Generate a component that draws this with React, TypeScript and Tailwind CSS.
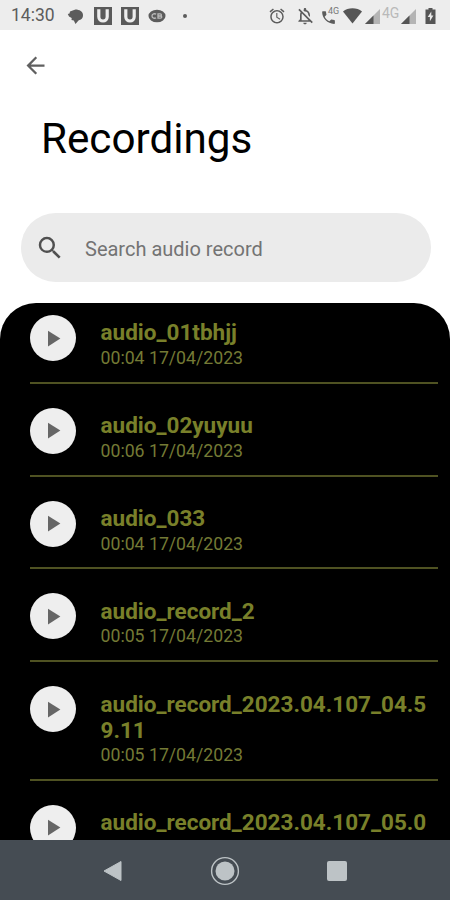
import React from 'react';
import { MdArrowBack, MdSearch, MdPlayArrow, MdAlarm, MdOutlineNotificationsOff, MdPhone } from 'react-icons/md';

interface Recording {
  name: string;
  duration: string;
  date: string;
}

const recordings: Recording[] = [
  { name: 'audio_01tbhjj', duration: '00:04', date: '17/04/2023' },
  { name: 'audio_02yuyuu', duration: '00:06', date: '17/04/2023' },
  { name: 'audio_033', duration: '00:04', date: '17/04/2023' },
  { name: 'audio_record_2', duration: '00:05', date: '17/04/2023' },
  { name: 'audio_record_2023.04.107_04.59.11', duration: '00:05', date: '17/04/2023' },
  { name: 'audio_record_2023.04.107_05.0', duration: '', date: '' },
];

const AppBadge: React.FC = () => (
  <svg width="18" height="18" viewBox="0 0 18 18">
    <path d="M0 0h18v18H0z" fill="#5a5a5a" />
    <path d="M4.800 2.200v7.600a4.200 4.200 0 0 0 8.400 0V2.200" fill="none" stroke="#ededed" strokeWidth="3.200" />
  </svg>
);

const Signal: React.FC = () => (
  <svg width="15" height="15" viewBox="0 0 15 15">
    <path d="M15 0v15H0z" fill="#b4b4b4" />
    <path d="M8.500 6.500V15H0z" fill="#555" />
  </svg>
);

const StatusBar: React.FC = () => (
  <div className="h-[30px] shrink-0 bg-[#ededed] flex items-center pl-[11px] pr-[14px] pt-[2px] text-[#5c5c5c]">
    <span className="text-[17.5px] leading-none w-[45px]">14:30</span>
    {/* Notifications */}
    <svg className="ml-[11px]" width="17" height="17" viewBox="0 0 17 17">
      <path d="M8.400 1.500C12.500 1.500 16 3.600 16 7s-1.700 4.500-4.500 5.400L8.500 16 6.800 12.500 4.500 12 4.700 10 2 8.500.8 6 2.500 5.600 3 3.600z" fill="#5c5c5c" />
    </svg>
    <div className="ml-[10px] flex gap-[9px]">
      <AppBadge />
      <AppBadge />
    </div>
    <svg className="ml-[9px]" width="18" height="14" viewBox="0 0 18 14">
      <ellipse cx="9" cy="7" rx="8.500" ry="6.300" fill="#5c5c5c" />
      <path d="M8 5.300c-1-1-4-.7-4 1.700s3 2.700 4 1.700M10 4.800v4.400h2.500c1.700 0 1.700-2.200 0-2.200H10h2.300c1.500 0 1.500-2.200 0-2.200z" fill="none" stroke="#bbb" strokeWidth="1.300" />
    </svg>
    <span className="ml-[17px] w-1 h-1 rounded-full bg-[#5c5c5c]"></span>

    {/* System */}
    <div className="ml-auto flex items-center">
      <MdAlarm size={18} />
      <MdOutlineNotificationsOff size={20} className="ml-[9px]" />
      <div className="relative ml-[7px] w-[17px] h-[17px]">
        <MdPhone size={17} className="mt-px -ml-[2px]" />
        <span className="absolute left-[6px] -top-px text-[9px] leading-none text-[#777]">4G</span>
      </div>
      <svg className="ml-[4px]" width="19" height="16" viewBox="0 0 19 16">
        <path d="M0 3.500C5-.8 14-.8 19 3.500L9.500 15.500z" fill="#555" />
      </svg>
      <div className="ml-[3px]"><Signal /></div>
      <span className="w-[19px] ml-[2px] -mt-[7px] text-[14px] leading-none text-[#b9b9b9]">4G</span>
      <Signal />
      <svg className="ml-[9px]" width="11" height="16" viewBox="0 0 11 16">
        <path d="M3.500 0h4v1.500H10.500V16H.5V1.500h3z" fill="#555" />
        <path d="M6.300 3.500 2.700 9h2.200v4.200l3.500-5.700H6.300z" fill="#e8e8e8" />
      </svg>
    </div>
  </div>
);

const RecordingRow: React.FC<{ recording: Recording }> = ({ recording }) => (
  <div className="ml-[30px] mr-[12px] flex items-start border-b-2 border-[#4f5222] pb-[12.8px]">
    <button className="mt-[24px] w-[46px] h-[46px] shrink-0 rounded-full bg-[#eee] flex items-center justify-center text-[#666]">
      <MdPlayArrow size={27} className="-ml-[2px]" />
    </button>
    <div className="ml-[24px] mt-[28.400px] h-fit flex-1 min-w-0">
      <h3 className="pl-[0.500px] pr-[7.500px] text-[22.500px] leading-[26px] font-bold text-[#79802a] break-all">{recording.name}</h3>
      <p className="mt-[2.600px] h-[21px] pl-[0.500px] text-[17.700px] leading-[21px] text-[#747a35]">
        {recording.duration} {recording.date}
      </p>
    </div>
  </div>
);

const App: React.FC = () => {
  return (
    <div className="w-[450px] h-[900px] flex flex-col overflow-hidden bg-white font-['Roboto',sans-serif]">
      <StatusBar />

      <header className="h-[183px] shrink-0">
        <button className="block ml-[22px] mt-[22px] text-[#606060]">
          <MdArrowBack size={27} />
        </button>
        <h1 className="ml-[41px] mt-[35px] text-[42.200px] leading-[50px] text-black">Recordings</h1>
      </header>

      <div className="ml-[21px] mr-[19px] h-[69px] shrink-0 rounded-full bg-[#ebebeb] flex items-center pl-[14px]">
        <MdSearch size={30} className="text-[#505050]" />
        <span className="ml-[20px] mt-[2px] text-[20px] text-[#737373]">Search audio record</span>
      </div>

      <main className="mt-[21px] flex-1 min-h-0 overflow-hidden rounded-t-[36px] bg-black">
        <div className="-mt-[12px]">
          {recordings.map((recording) => (
            <RecordingRow key={recording.name} recording={recording} />
          ))}
        </div>
      </main>

      {/* Navigation bar */}
      <nav className="h-[60px] shrink-0 bg-[#454c53] flex items-center justify-center gap-[87px] pt-px">
        <svg width="20" height="22" viewBox="0 0 20 22">
          <path d="M18 1.500v19L1 11z" fill="#bdc3c6" stroke="#bdc3c6" strokeLinejoin="round" />
        </svg>
        <svg width="30" height="30" viewBox="0 0 30 30">
          <circle cx="15" cy="15" r="13.400" fill="none" stroke="#bdc3c6" strokeWidth="1.400" />
          <circle cx="15" cy="15" r="9.500" fill="#bdc3c6" />
        </svg>
        <span className="w-[20px] h-[20px] rounded-[2px] bg-[#bdc3c6]"></span>
      </nav>
    </div>
  );
};

export default App;
